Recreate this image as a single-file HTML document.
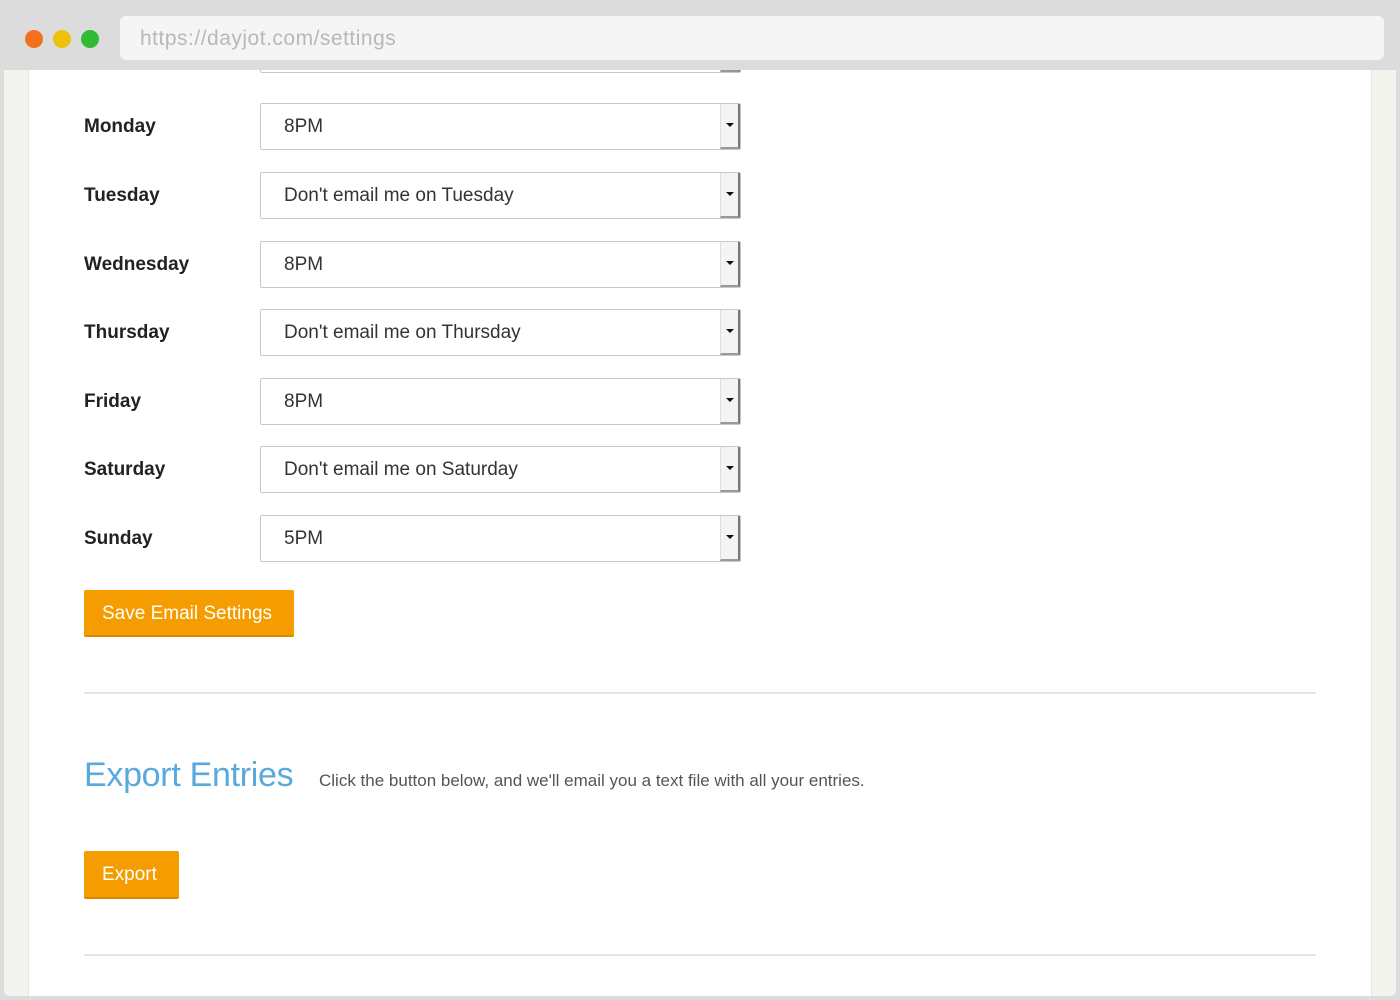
<!DOCTYPE html>
<html><head><meta charset="utf-8"><style>
*{margin:0;padding:0;box-sizing:border-box}
body{width:1400px;height:1000px;background:#dcdcdc;position:relative;overflow:hidden;font-family:"Liberation Sans",sans-serif}
.frame{position:absolute;left:4px;top:70px;width:1392px;height:926px;background:#f4f4ee;border-radius:0 0 6px 6px}
.panel{position:absolute;left:28px;top:70px;width:1344px;height:926px;background:#fff;border-left:1px solid #e6e6e0;border-right:1px solid #e6e6e0}
.dot{position:absolute;top:30px;width:18px;height:18px;border-radius:50%}
.url{position:absolute;left:120px;top:16px;width:1264px;height:44px;background:#f5f5f5;border-radius:6px;font-size:21px;color:#b8b8b8;padding:11px 0 0 20px;letter-spacing:0.5px}
.lab{position:absolute;left:84px;font-size:19px;font-weight:bold;color:#222}
.sel{position:absolute;left:260px;width:481px;height:47px;border:1px solid #c8c8c8;border-radius:2px;background:#fff;font-size:19px;color:#333;padding:12px 0 0 23px}
.sel .ar{position:absolute;right:0;top:0;width:20px;height:45px;background:#f4f4f4;border-left:1px solid #ddd;border-right:2px solid #777;border-bottom:2px solid #999}
.sel .ar:after{content:"";position:absolute;left:5px;top:19px;border-left:4px solid transparent;border-right:4px solid transparent;border-top:4px solid #111}
.btn{position:absolute;left:84px;background:#f59c00;color:#fff;font-size:19px;border-radius:2px;border-bottom:2px solid #d98a00;padding:13px 0 0 18px;white-space:nowrap}
.hr{position:absolute;left:84px;width:1232px;height:2px;background:#e6e6e6}
</style></head><body>
<div class="frame"></div>
<div class="panel"></div>
<div class="sel" style="top:26px;height:47px"><div class="ar"></div></div>
<div style="position:absolute;left:0;top:0;width:1400px;height:70px;background:#dcdcdc"></div>
<div class="dot" style="left:25px;background:#f2711c"></div>
<div class="dot" style="left:53px;background:#eec10c"></div>
<div class="dot" style="left:81px;background:#31bb34"></div>
<div class="url">https://dayjot.com/settings</div>

<div class="lab" style="top:116px">Monday</div><div class="sel" style="top:103px">8PM<div class="ar"></div></div>
<div class="lab" style="top:185px">Tuesday</div><div class="sel" style="top:172px">Don't email me on Tuesday<div class="ar"></div></div>
<div class="lab" style="top:254px">Wednesday</div><div class="sel" style="top:241px">8PM<div class="ar"></div></div>
<div class="lab" style="top:322px">Thursday</div><div class="sel" style="top:309px">Don't email me on Thursday<div class="ar"></div></div>
<div class="lab" style="top:391px">Friday</div><div class="sel" style="top:378px">8PM<div class="ar"></div></div>
<div class="lab" style="top:459px">Saturday</div><div class="sel" style="top:446px">Don't email me on Saturday<div class="ar"></div></div>
<div class="lab" style="top:528px">Sunday</div><div class="sel" style="top:515px">5PM<div class="ar"></div></div>
<div class="btn" style="top:590px;width:210px;height:47px">Save Email Settings</div>
<div class="hr" style="top:692px"></div>
<div style="position:absolute;left:84px;top:756px;font-size:34px;color:#5aa9dd;letter-spacing:-0.3px">Export Entries</div>
<div style="position:absolute;left:319px;top:771px;font-size:17px;color:#555">Click the button below, and we'll email you a text file with all your entries.</div>
<div class="btn" style="top:851px;width:95px;height:48px">Export</div>
<div class="hr" style="top:954px"></div>
</body></html>
